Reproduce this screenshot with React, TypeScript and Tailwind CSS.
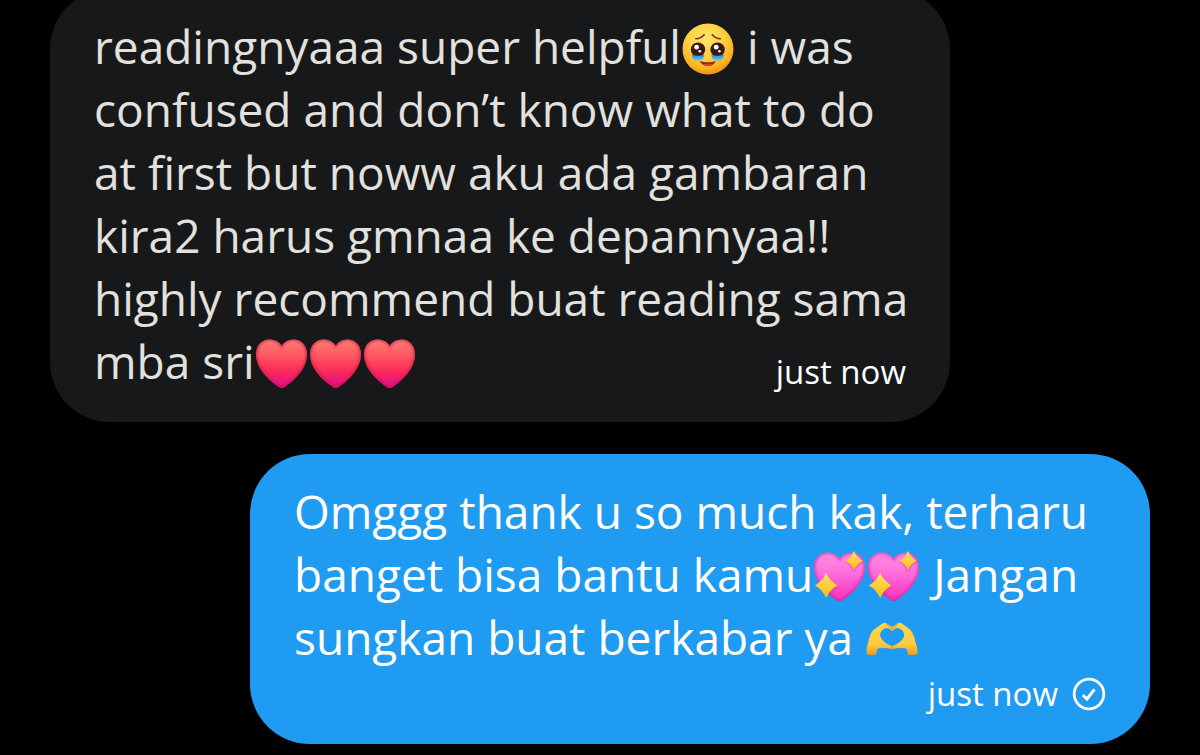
import type { ReactNode } from "react";
import clsx from "clsx";

const HEART =
  "M26.7 8.7C29.4 4.6 33.6 2.5 38.4 2.5C46.4 2.5 52 8.6 52 17.2C52 31 41.4 41.6 29.4 50.2Q26.7 52 24 50.2C12 41.6 1 31 1 17.2C1 8.6 6.6 2.5 14.6 2.5C19.6 2.5 24 4.6 26.7 8.7Z";

function Emoji({ label, children }: { label: string; children: ReactNode }) {
  return (
    <svg
      role="img"
      aria-label={label}
      viewBox="0 0 54 54"
      className="inline-block h-[54px] w-[54px] align-[-12px]"
    >
      {children}
    </svg>
  );
}

function EmojiDefs() {
  return (
    <svg className="absolute h-0 w-0" aria-hidden="true">
      <defs>
        <linearGradient id="redHeart" x1="0" y1="0" x2="0" y2="1">
          <stop offset="0" stopColor="#ff8079" />
          <stop offset="0.3" stopColor="#ff5a62" />
          <stop offset="0.58" stopColor="#fb3458" />
          <stop offset="0.76" stopColor="#f42066" />
          <stop offset="0.9" stopColor="#e6128f" />
          <stop offset="1" stopColor="#ed0a70" />
        </linearGradient>
        <linearGradient id="pinkHeart" x1="0" y1="0" x2="0" y2="1">
          <stop offset="0" stopColor="#ff8fe0" />
          <stop offset="0.45" stopColor="#fd6bdb" />
          <stop offset="1" stopColor="#fb2fb9" />
        </linearGradient>
        <linearGradient id="spark" x1="0" y1="0" x2="0" y2="1">
          <stop offset="0" stopColor="#ffe566" />
          <stop offset="1" stopColor="#fdb813" />
        </linearGradient>
        <radialGradient id="face" cx="0.45" cy="0.3" r="0.72">
          <stop offset="0" stopColor="#ffe36a" />
          <stop offset="0.5" stopColor="#ffcf40" />
          <stop offset="0.82" stopColor="#fdb023" />
          <stop offset="1" stopColor="#ef8a12" />
        </radialGradient>
        <linearGradient id="tear" x1="0" y1="0" x2="0" y2="1">
          <stop offset="0" stopColor="#1f86cf" />
          <stop offset="1" stopColor="#62cdf8" />
        </linearGradient>
        <linearGradient id="hands" x1="0" y1="0" x2="0" y2="1">
          <stop offset="0" stopColor="#ffd54a" />
          <stop offset="0.65" stopColor="#ffcc40" />
          <stop offset="1" stopColor="#f09a1c" />
        </linearGradient>
        <filter id="soft" x="-20%" y="-20%" width="140%" height="140%">
          <feGaussianBlur stdDeviation="1.2" />
        </filter>
        <clipPath id="heartClip">
          <path d={HEART} />
        </clipPath>
      </defs>
    </svg>
  );
}

function RedHeart() {
  return (
    <Emoji label="red heart">
      <path d={HEART} fill="url(#redHeart)" />
      <g clipPath="url(#heartClip)">
        <path d={HEART} fill="none" stroke="#c9163f" strokeWidth="3" opacity="0.65" filter="url(#soft)" />
      </g>
    </Emoji>
  );
}

function SparklingHeart() {
  return (
    <Emoji label="sparkling heart">
      <path d={HEART} fill="url(#pinkHeart)" />
      <g clipPath="url(#heartClip)">
        <path d={HEART} fill="none" stroke="#c81d95" strokeWidth="3" opacity="0.6" filter="url(#soft)" />
        <path d="M41 4Q43 11 50 12Q43 13 41 22Q39 13 33 12Q39 11 41 4ZM14 24Q17 34 25 36.5Q17 39 14 50Z" fill="#a5196b" opacity="0.6" filter="url(#soft)" />
      </g>
      <path d="M41 1Q43.6 7.6 49.6 10.7Q43.6 13.8 41 20.2Q38.4 13.8 32.6 10.7Q38.4 7.6 41 1Z" fill="url(#spark)" />
      <path d="M13.2 22.8Q17 31.2 24.6 35.5Q17 39.8 13.2 48Q9.4 39.8 2 35.5Q9.4 31.2 13.2 22.8Z" fill="url(#spark)" />
    </Emoji>
  );
}

function TearyEye({ cx }: { cx: number }) {
  return (
    <g>
      <circle cx={cx} cy="27.6" r="7.2" fill="#381a12" />
      <path
        d={`M${cx - 6.4} 32.4Q${cx} 35 ${cx + 6.4} 32.4Q${cx + 5.6} 38.8 ${cx} 38.8Q${cx - 5.6} 38.8 ${cx - 6.4} 32.4Z`}
        fill="url(#tear)"
      />
      <circle cx={cx - 1.4} cy="25.2" r="2.4" fill="#fff" />
      <circle cx={cx + 1.8} cy="29.2" r="1.3" fill="#fff" />
    </g>
  );
}

function HoldingBackTears() {
  return (
    <Emoji label="face holding back tears">
      <circle cx="27" cy="27" r="25.5" fill="url(#face)" />
      <path d="M14.8 16.8Q20 16.6 23.2 12.8M31.2 12.8Q34.4 16.6 39.4 16.8" fill="none" stroke="#6b3510" strokeWidth="1.6" strokeLinecap="round" />
      <TearyEye cx={17} />
      <TearyEye cx={36.6} />
      <path d="M18.6 39Q27 41.6 35 39Q32.6 44 27 44Q21 44 18.6 39Z" fill="#8c2f16" />
      <path d="M21.4 42.2Q27 41.6 32.2 42.2Q30 44 27 44Q23.6 44 21.4 42.2Z" fill="#d8452f" />
    </Emoji>
  );
}

function HeartHands() {
  return (
    <Emoji label="heart hands">
      <path
        fillRule="evenodd"
        d="M1.4 40.6Q1 35 3.2 29.5Q5 20 9 16.6L17.4 10.6Q20 9 22.2 10.8L27.2 14L32 10.8Q34.4 9 37 10.6L45 16.6Q48.4 20 50.4 29Q53 35 52.6 40.6Q50 43 43 41.6Q42.6 36.4 40.4 35.2Q33 34.4 27.2 36.2Q21 34.4 13.4 35.2Q11.4 36.4 11 41.6Q4 43 1.4 40.6ZM27.2 18.2Q23.6 13.8 19.8 15.4Q14.8 17.6 15.2 23Q17 29.4 27.2 33.2Q37.4 29.4 39.2 23Q39.4 17.6 34.6 15.4Q30.8 13.8 27.2 18.2Z"
        fill="url(#hands)"
      />
      <path d="M27.2 14V18.2M27.2 33.2V36M22 11L25.6 15.4M32.2 11L28.8 15.4" fill="none" stroke="#ce7a15" strokeWidth="1" strokeLinecap="round" opacity="0.75" />
    </Emoji>
  );
}

function SentIcon() {
  return (
    <svg viewBox="0 0 34 34" className="h-[34px] w-[34px]" fill="none" stroke="currentColor" role="img" aria-label="Sent">
      <circle cx="17" cy="17" r="14.8" strokeWidth="2.8" />
      <path d="M10.8 18.2L15 22L22.4 12.4" strokeWidth="3" />
    </svg>
  );
}

function Line({ children }: { children: ReactNode }) {
  return <span className="block whitespace-nowrap">{children}</span>;
}

function Bubble({ className, children }: { className: string; children: ReactNode }) {
  return (
    <article className={clsx("w-3/4 rounded-[60px] px-[44px] pt-[26px] text-[46px] leading-[63px]", className)}>
      {children}
    </article>
  );
}

export default function App() {
  return (
    <main className="flex min-h-screen flex-col gap-8 overflow-hidden bg-black font-['Open_Sans',sans-serif]">
      <EmojiDefs />

      <Bubble className="-mt-[11px] ml-[50px] self-start bg-[#16181a] pb-[29px] text-[#e3e1de]">
        <div className="flex items-end justify-between">
          <p className="w-0">
            <Line>
              readingnyaaa super helpful
              <HoldingBackTears /> i was
            </Line>
            <Line>confused and don’t know what to do</Line>
            <Line>at first but noww aku ada gambaran</Line>
            <Line>kira2 harus gmnaa ke depannyaa!!</Line>
            <Line>highly recommend buat reading sama</Line>
            <Line>
              mba sri
              <RedHeart />
              <RedHeart />
              <RedHeart />
            </Line>
          </p>
          <time className="text-[33px] leading-[42px] text-white">just now</time>
        </div>
      </Bubble>

      <Bubble className="mr-[50px] self-end bg-[#1f9bf2] pb-[29px] text-white">
        <p>
          <Line>Omggg thank u so much kak, terharu</Line>
          <Line>
            banget bisa bantu kamu
            <SparklingHeart />
            <SparklingHeart /> Jangan
          </Line>
          <Line>
            sungkan buat berkabar ya <HeartHands />
          </Line>
        </p>
        <div className="flex items-center justify-end gap-[14px] pt-1">
          <time className="text-[33px] leading-[42px]">just now</time>
          <SentIcon />
        </div>
      </Bubble>
    </main>
  );
}
